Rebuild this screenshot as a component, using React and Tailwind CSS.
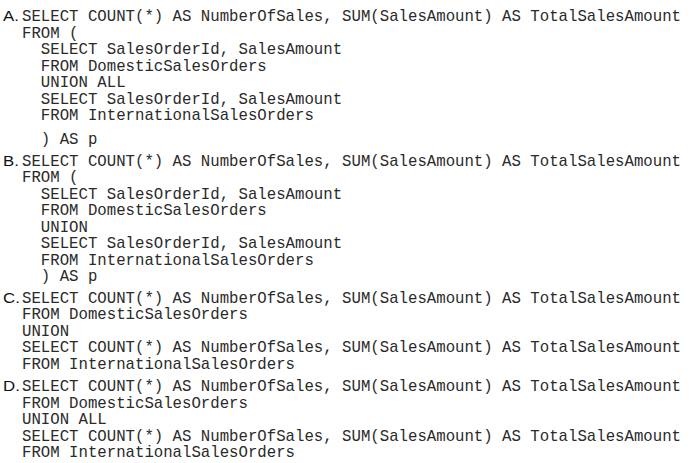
import React from 'react';

const HEAD = 'SELECT COUNT(*) AS NumberOfSales, SUM(SalesAmount) AS TotalSalesAmount';

const OPTIONS = [
  {
    key: 'A',
    gap: 'mt-0',
    lines: [
      HEAD,
      'FROM (',
      '  SELECT SalesOrderId, SalesAmount',
      '  FROM DomesticSalesOrders',
      '  UNION ALL',
      '  SELECT SalesOrderId, SalesAmount',
      '  FROM InternationalSalesOrders',
    ],
    tail: '  ) AS p',
  },
  {
    key: 'B',
    gap: 'mt-[4px]',
    lines: [
      HEAD,
      'FROM (',
      '  SELECT SalesOrderId, SalesAmount',
      '  FROM DomesticSalesOrders',
      '  UNION',
      '  SELECT SalesOrderId, SalesAmount',
      '  FROM InternationalSalesOrders',
      '  ) AS p',
    ],
  },
  {
    key: 'C',
    gap: 'mt-[4px]',
    lines: [
      HEAD,
      'FROM DomesticSalesOrders',
      'UNION',
      HEAD,
      'FROM InternationalSalesOrders',
    ],
  },
  {
    key: 'D',
    gap: 'mt-[5px]',
    lines: [
      HEAD,
      'FROM DomesticSalesOrders',
      'UNION ALL',
      HEAD,
      'FROM InternationalSalesOrders',
    ],
  },
];

const Option = ({ opt }) => (
  <div className={`flex items-baseline ${opt.gap}`}>
    <span className="w-[22px] shrink-0 pl-[3px] font-['Liberation_Sans',Arial,sans-serif] text-[14px] leading-[16.5px] text-[#111]">
      <span className="inline-block origin-left scale-x-[1.2]">{opt.key}.</span>
    </span>
    <div className="font-['Liberation_Mono','Courier_New',monospace] text-[15.7px] leading-[16.5px] text-[#2a2a2a] whitespace-pre">
      {opt.lines.map((l, i) => (
        <div key={i}>{l}</div>
      ))}
      {opt.tail && <div className="mt-[7.5px]">{opt.tail}</div>}
    </div>
  </div>
);

export default function App() {
  return (
    <div className="w-[692px] h-[463px] bg-white pt-[8px] overflow-hidden">
      {OPTIONS.map((o) => (
        <Option key={o.key} opt={o} />
      ))}
    </div>
  );
}
